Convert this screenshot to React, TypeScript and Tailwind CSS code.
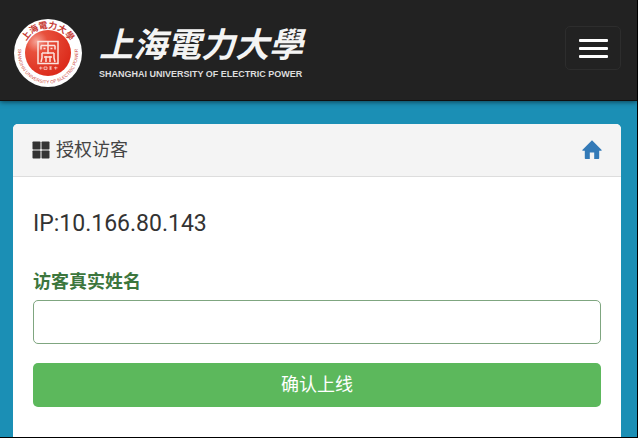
import type { SVGProps } from 'react';

function SchoolSeal(props: SVGProps<SVGSVGElement>) {
  return (
    <svg viewBox="0 0 70 70" role="img" aria-label="上海電力大學" {...props}>
      <defs>
        <radialGradient id="seal-red" cx="0.25" cy="0.25" r="0.8">
          <stop offset="0" stopColor="#f5a397" />
          <stop offset="0.3" stopColor="#e8503c" />
          <stop offset="1" stopColor="#dc2c1c" />
        </radialGradient>
        <path id="seal-top" d="M13 24 A24.5 24.5 0 0 1 57 24" />
        <path id="seal-bottom" d="M5.5 30 A30 30 0 1 0 64.5 30" />
      </defs>
      <circle cx="35" cy="35" r="34" fill="#fff" />
      <circle cx="35" cy="35" r="23" fill="url(#seal-red)" />
      <text className="font-['Noto_Sans_CJK_TC',sans-serif] font-bold" fontSize="8.8" fill="#c63a34" textAnchor="middle">
        <textPath href="#seal-top" startOffset="50%">上海電力大學</textPath>
      </text>
      <text className="font-['Liberation_Sans',sans-serif]" fontSize="4.6" fill="#cf4f47" textAnchor="middle">
        <textPath href="#seal-bottom" startOffset="50%">SHANGHAI UNIVERSITY OF ELECTRIC POWER</textPath>
      </text>
      <g fill="none" stroke="#fbe3de" strokeWidth="1.5">
        <path d="M25 23.5h20v22H25z" />
        <path d="M28 27.5h14M28 27.5v4M42 27.5v4M35 24v12M30.5 30.5h2M37.5 30.5h2" />
        <path d="M29 35h12M29 35v5l-1 4M41 35v5l1 4M33 38v6M37 38v6M31 39h8" />
      </g>
      {/* founding date strip under the emblem */}
      <path d="M26 50h3.5M27.7 48.6v3M31 49h3v2.4h-3zM36 49h3M36 51h3M37.5 48.6v3M41 49.8h3.5M42.7 48.6v3" fill="none" stroke="#f9d0ca" strokeWidth="0.8" />
    </svg>
  );
}

function TilesIcon(props: SVGProps<SVGSVGElement>) {
  return (
    <svg viewBox="0 0 18 18" fill="currentColor" aria-hidden="true" {...props}>
      <rect x="0.5" y="0.5" width="8" height="8" rx="0.8" />
      <rect x="9.5" y="0.5" width="8" height="8" rx="0.8" />
      <rect x="0.5" y="9.5" width="8" height="8" rx="0.8" />
      <rect x="9.5" y="9.5" width="8" height="8" rx="0.8" />
    </svg>
  );
}

function HomeIcon(props: SVGProps<SVGSVGElement>) {
  return (
    <svg viewBox="0 0 20 20" fill="currentColor" aria-hidden="true" {...props}>
      <path d="M10 0.3 L19.7 9.9 Q19.9 10.7 19.2 10.7 H17.2 V18.3 Q17.2 19 16.5 19 H12.2 V12.6 H7.8 V19 H3.5 Q2.8 19 2.8 18.3 V10.7 H0.8 Q0.1 10.7 0.3 9.9 Z" />
    </svg>
  );
}

function Navbar() {
  return (
    <header className="relative flex items-start justify-between border-b border-[#101010] bg-[#222] pt-[18px] pr-4 pb-3 pl-[13px] shadow-[0_1px_5px_rgba(0,0,0,0.55)]">
      <a href="#" className="flex items-start gap-4 text-[#f4f4f4]">
        <SchoolSeal className="size-[70px] shrink-0" />
        <span className="flex flex-col">
          <span className="font-['Noto_Sans_CJK_TC',sans-serif] text-[34px] leading-[50px] font-bold whitespace-nowrap italic">上海電力大學</span>
          <span className="font-['Liberation_Sans',sans-serif] text-[9px] leading-3 font-bold whitespace-nowrap text-[#ddd]">
            SHANGHAI UNIVERSITY OF ELECTRIC POWER
          </span>
        </span>
      </a>
      <button
        type="button"
        aria-label="Toggle navigation"
        className="mt-2 flex h-11 w-14 shrink-0 flex-col items-center justify-center gap-[5px] rounded-[5px] border border-[#2d2d2d]"
      >
        <span className="h-[3px] w-[29px] rounded-[1px] bg-white" />
        <span className="h-[3px] w-[29px] rounded-[1px] bg-white" />
        <span className="h-[3px] w-[29px] rounded-[1px] bg-white" />
      </button>
    </header>
  );
}

export default function App() {
  return (
    <div className="flex min-h-screen flex-col border-r border-b border-black bg-[#1b8fb5] font-[Roboto,'Noto_Sans_CJK_SC',sans-serif] text-lg text-[#333]">
      <Navbar />
      <main className="flex flex-1 flex-col pt-[23px] pr-4 pl-[13px]">
        <section className="flex-1 rounded-t-[5px] bg-white">
          <div className="flex items-center justify-between rounded-t-[5px] border-b border-[#ddd] bg-[#f4f4f4] px-[19px] py-3">
            <h1 className="flex items-center gap-1.5 leading-7 text-[#444]">
              <TilesIcon className="size-[18px] text-[#333]" />
              授权访客
            </h1>
            <a href="#" aria-label="首页" className="text-[#337ab7]">
              <HomeIcon className="size-5" />
            </a>
          </div>
          <form className="flex flex-col px-5 pt-[31px] pb-7" onSubmit={(e) => e.preventDefault()}>
            <p className="text-[23px] leading-8">IP:10.166.80.143</p>
            <label htmlFor="visitor-name" className="mt-7 leading-7 font-bold text-[#3c763d]">
              访客真实姓名
            </label>
            <input
              id="visitor-name"
              type="text"
              className="mt-1 h-11 w-full rounded-[5px] border border-[#7fa680] bg-white px-4"
            />
            <button type="submit" className="mt-[19px] h-11 w-full rounded-[5px] bg-[#5cb85c] text-white">
              确认上线
            </button>
          </form>
        </section>
      </main>
    </div>
  );
}
